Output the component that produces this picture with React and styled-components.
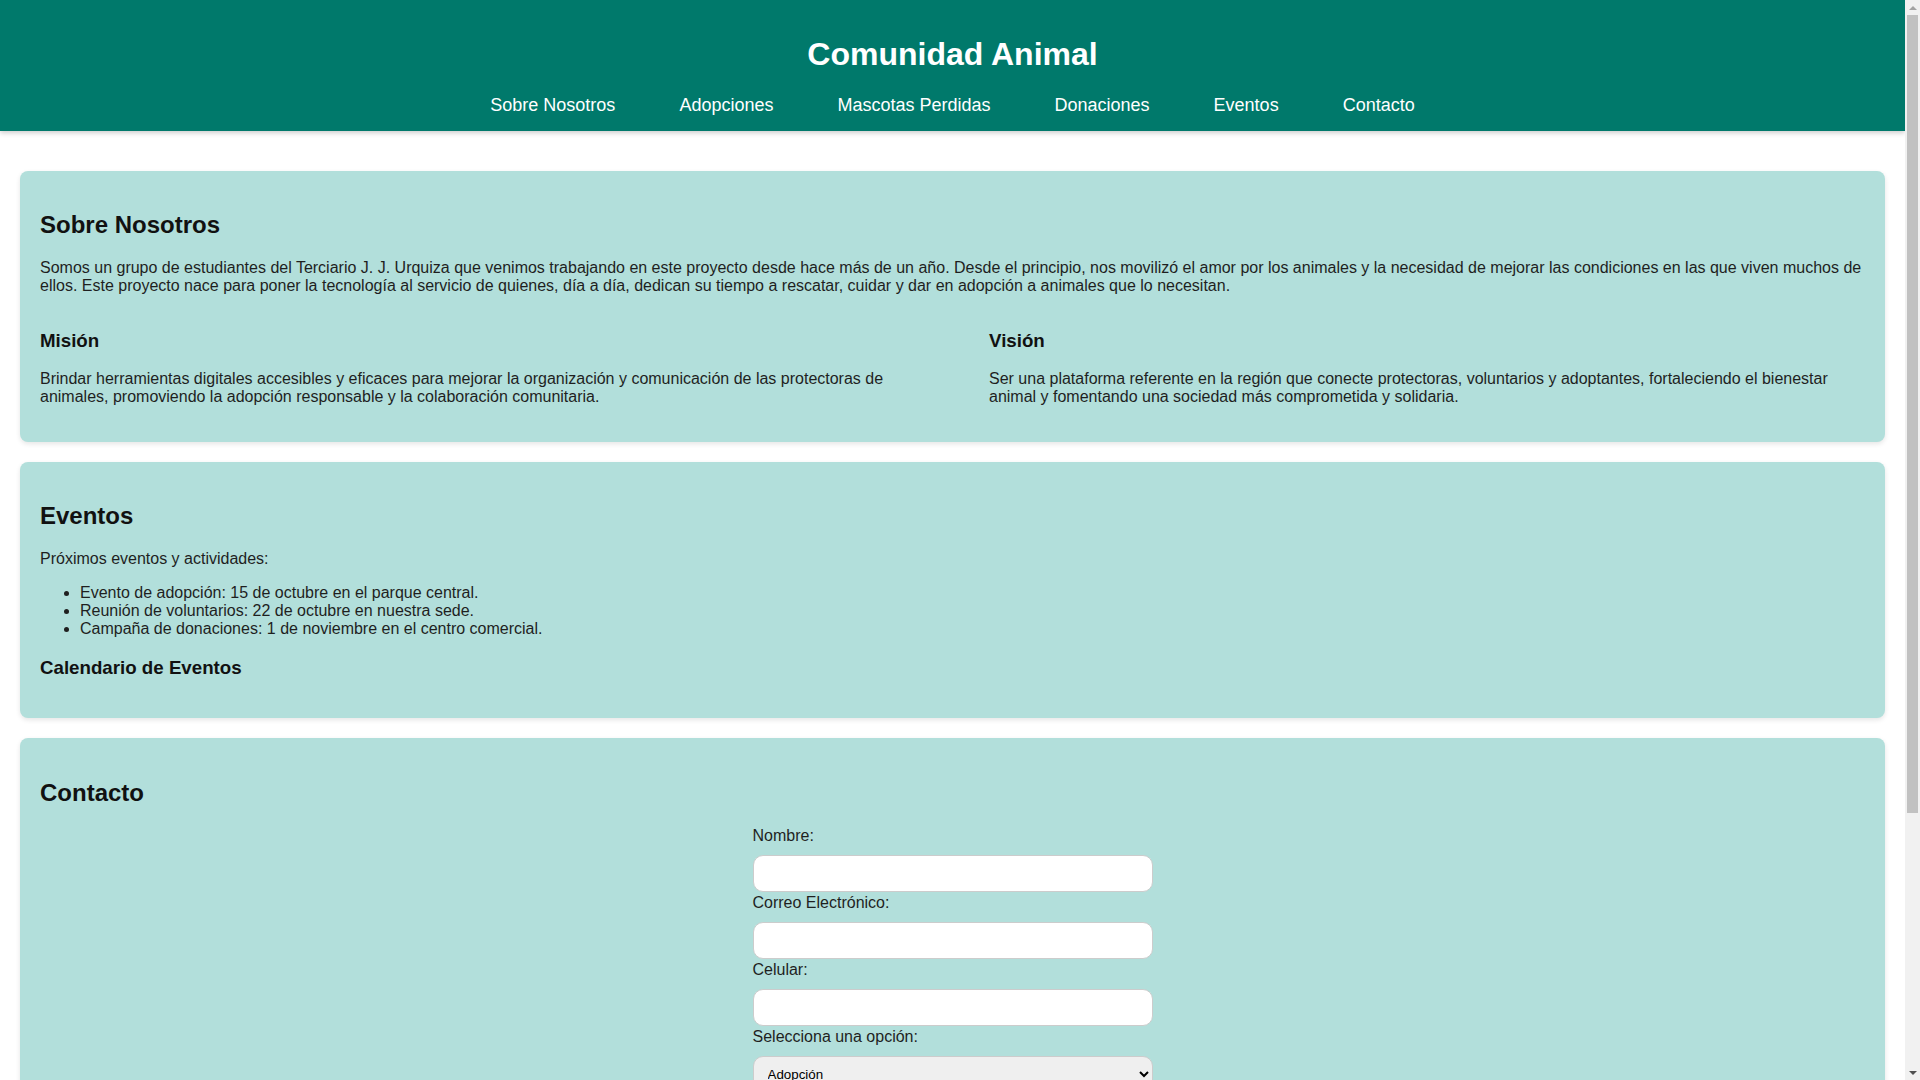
import React from 'react';
import styled, { createGlobalStyle } from 'styled-components';

const GlobalStyle = createGlobalStyle`
    body {
        margin: 0;
        font-family: "Liberation Sans", Arial, sans-serif;
        font-size: 16px;
        color: #1f1f1f;
        background-color: #ffffff;
    }
`;

const Page = styled.div`
    margin-right: 15px;
`;

const ScrollTrack = styled.div`
    position: fixed;
    top: 0;
    right: 0;
    width: 15px;
    height: 100vh;
    display: flex;
    flex-direction: column;
    background-color: #f1f1f1;
    z-index: 100;
`;

const ScrollButton = styled.div`
    height: 15px;
    flex: none;
    display: flex;
    align-items: center;
    justify-content: center;
    &:after {
        content: '';
        border-left: 4px solid transparent;
        border-right: 4px solid transparent;
        border-${(p) => (p.$down ? 'top' : 'bottom')}: 4px solid ${(p) => (p.$down ? '#505050' : '#a3a3a3')};
    }
`;

const ScrollArea = styled.div`
    flex: 1;
    padding: 0 2px;
`;

const ScrollThumb = styled.div`
    height: 76%;
    background-color: #c1c1c1;
`;

const Header = styled.header`
    background-color: #00796b;
    color: #ffffff;
    text-align: center;
    padding: 15px 0 15px;
    box-shadow: 0 2px 5px rgba(0, 0, 0, 0.2);
`;

const Title = styled.h1`
    font-size: 32px;
    margin: 21px 0 22px;
`;

const NavList = styled.ul`
    display: flex;
    justify-content: center;
    gap: 64px;
    list-style: none;
    margin: 0;
    padding: 0;
`;

const NavLink = styled.a`
    color: #ffffff;
    font-size: 18px;
    text-decoration: none;
    &:hover {
        text-decoration: underline;
    }
`;

const Main = styled.main`
    display: flex;
    flex-direction: column;
    gap: 20px;
    padding: 40px 20px 20px;
`;

const Section = styled.section`
    background-color: #b2dfdb;
    padding: ${(p) => (p.$form ? '22px 20px 20px' : '20px')};
    border-radius: 8px;
    box-shadow: 0 2px 5px rgba(0, 0, 0, 0.1);
`;

const SectionTitle = styled.h2`
    font-size: 1.5em;
    margin: 0.83em 0;
    color: #111;
`;

const SubTitle = styled.h3`
    font-size: 1.17em;
    margin: 1em 0;
    color: #111;
`;

const Text = styled.p`
    margin: 1em 0;
`;

const Columns = styled.div`
    display: flex;
    justify-content: space-between;
`;

const Column = styled.div`
    width: 48%;
`;

const EventList = styled.ul`
    margin: 1em 0;
    padding-left: 40px;
`;

const Form = styled.form`
    max-width: 400px;
    margin: 0 auto;
`;

const Label = styled.label`
    display: block;
`;

const Field = styled.input`
    display: block;
    width: 100%;
    height: 37px;
    box-sizing: border-box;
    margin: 10px 0 2px;
    padding: 10px;
    border: 1px solid #cccccc;
    border-radius: 10px;
    background-color: #ffffff;
    font-family: "Liberation Sans", Arial, sans-serif;
    font-size: 13.33px;
`;

const Select = styled.select`
    display: block;
    width: 100%;
    height: 37px;
    box-sizing: border-box;
    margin: 10px 0 2px;
    padding: 0 10px;
    border: 1px solid #cccccc;
    border-radius: 10px;
    background-color: #efefef;
    font-family: "Liberation Sans", Arial, sans-serif;
    font-size: 13.33px;
`;

const TextArea = styled.textarea`
    display: block;
    width: 100%;
    box-sizing: border-box;
    margin: 10px 0 0;
    padding: 10px;
    border: 1px solid #cccccc;
    border-radius: 10px;
    font-family: "Liberation Sans", Arial, sans-serif;
    font-size: 13.33px;
    resize: vertical;
`;

const SubmitButton = styled.button`
    margin-top: 15px;
    padding: 10px 20px;
    border: none;
    border-radius: 10px;
    background-color: #00796b;
    color: #ffffff;
    font-family: "Liberation Sans", Arial, sans-serif;
    font-size: 16px;
    cursor: pointer;
`;

const Footer = styled.footer`
    background-color: #00796b;
    color: #ffffff;
    text-align: center;
    padding: 16px 0;
`;

const navItems = [
    { href: '#sobre-nosotros', label: 'Sobre Nosotros' },
    { href: '#adopciones', label: 'Adopciones' },
    { href: '#mascotas-perdidas', label: 'Mascotas Perdidas' },
    { href: '#donaciones', label: 'Donaciones' },
    { href: '#eventos', label: 'Eventos' },
    { href: '#contacto', label: 'Contacto' },
];

const App = () => (
    <>
        <GlobalStyle />
        <ScrollTrack aria-hidden="true">
            <ScrollButton />
            <ScrollArea>
                <ScrollThumb />
            </ScrollArea>
            <ScrollButton $down />
        </ScrollTrack>
        <Page>
            <Header>
                <Title>Comunidad Animal</Title>
                <nav>
                    <NavList>
                        {navItems.map((item) => (
                            <li key={item.href}>
                                <NavLink href={item.href}>{item.label}</NavLink>
                            </li>
                        ))}
                    </NavList>
                </nav>
            </Header>
            <Main>
                <Section id="sobre-nosotros">
                    <SectionTitle>Sobre Nosotros</SectionTitle>
                    <Text>
                        Somos un grupo de estudiantes del Terciario J. J. Urquiza que venimos trabajando en este
                        proyecto desde hace más de un año. Desde el principio, nos movilizó el amor por los animales y
                        la necesidad de mejorar las condiciones en las que viven muchos de ellos. Este proyecto nace
                        para poner la tecnología al servicio de quienes, día a día, dedican su tiempo a rescatar,
                        cuidar y dar en adopción a animales que lo necesitan.
                    </Text>
                    <Columns>
                        <Column>
                            <SubTitle>Misión</SubTitle>
                            <Text>
                                Brindar herramientas digitales accesibles y eficaces para mejorar la organización y
                                comunicación de las protectoras de animales, promoviendo la adopción responsable y la
                                colaboración comunitaria.
                            </Text>
                        </Column>
                        <Column>
                            <SubTitle>Visión</SubTitle>
                            <Text>
                                Ser una plataforma referente en la región que conecte protectoras, voluntarios y
                                adoptantes, fortaleciendo el bienestar animal y fomentando una sociedad más
                                comprometida y solidaria.
                            </Text>
                        </Column>
                    </Columns>
                </Section>
                <Section id="eventos">
                    <SectionTitle>Eventos</SectionTitle>
                    <Text>Próximos eventos y actividades:</Text>
                    <EventList>
                        <li>Evento de adopción: 15 de octubre en el parque central.</li>
                        <li>Reunión de voluntarios: 22 de octubre en nuestra sede.</li>
                        <li>Campaña de donaciones: 1 de noviembre en el centro comercial.</li>
                    </EventList>
                    <SubTitle>Calendario de Eventos</SubTitle>
                </Section>
                <Section id="contacto" $form>
                    <SectionTitle>Contacto</SectionTitle>
                    <Form onSubmit={(e) => e.preventDefault()}>
                        <Label htmlFor="nombre">Nombre:</Label>
                        <Field id="nombre" type="text" />
                        <Label htmlFor="correo">Correo Electrónico:</Label>
                        <Field id="correo" type="email" />
                        <Label htmlFor="celular">Celular:</Label>
                        <Field id="celular" type="tel" />
                        <Label htmlFor="opcion">Selecciona una opción:</Label>
                        <Select id="opcion" defaultValue="adopcion">
                            <option value="adopcion">Adopción</option>
                            <option value="voluntariado">Voluntariado</option>
                            <option value="donacion">Donación</option>
                            <option value="otro">Otro</option>
                        </Select>
                        <Label htmlFor="mensaje">Mensaje:</Label>
                        <TextArea id="mensaje" rows="5" />
                        <SubmitButton type="submit">Enviar</SubmitButton>
                    </Form>
                </Section>
            </Main>
            <Footer>© 2024 Comunidad Animal</Footer>
        </Page>
    </>
);

export default App;
